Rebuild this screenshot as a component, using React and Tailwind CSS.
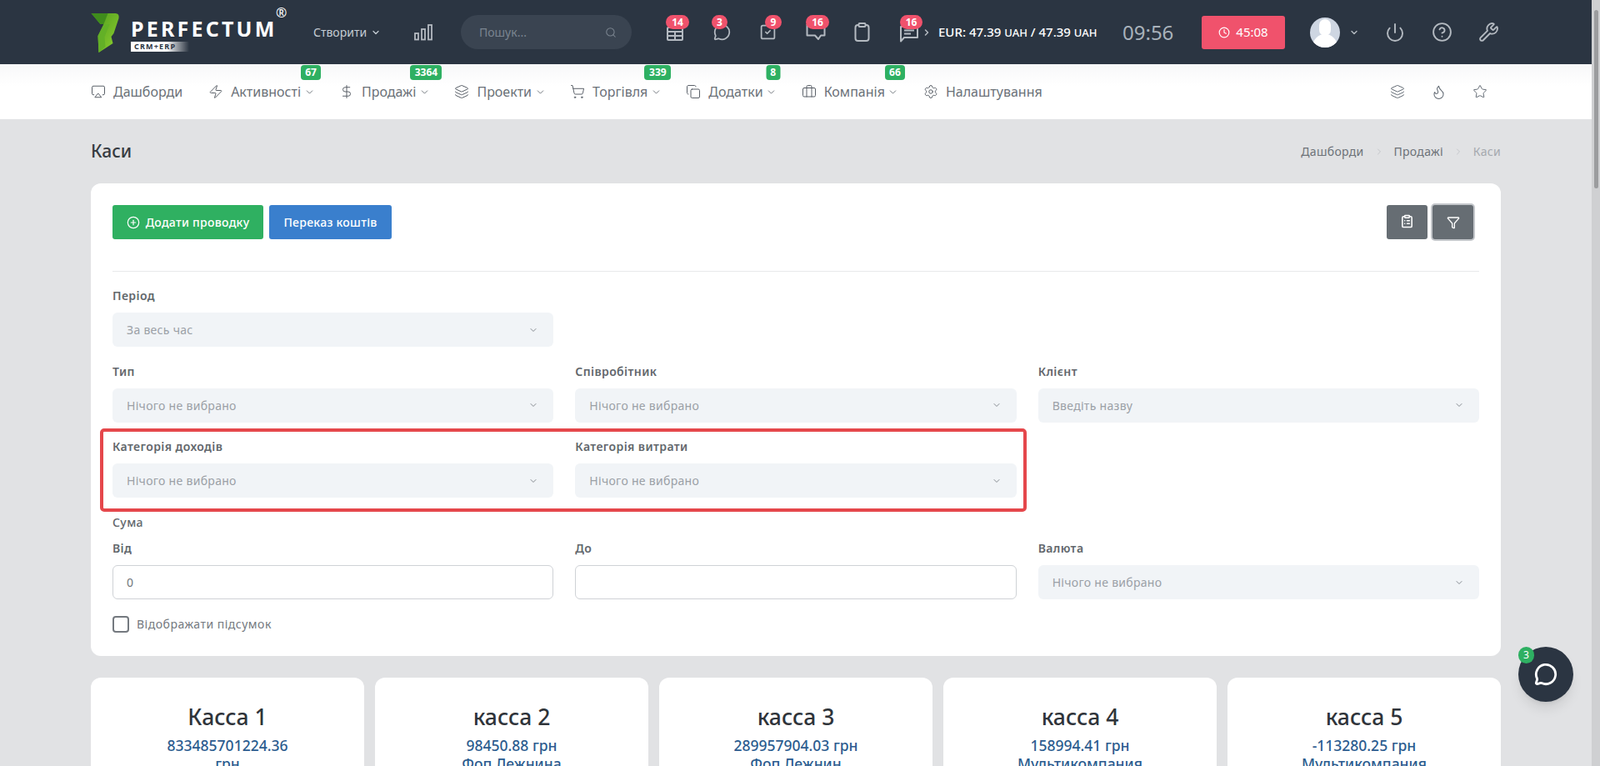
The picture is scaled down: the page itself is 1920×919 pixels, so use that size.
import React from "react";
import {
  Airplay, Zap, DollarSign, Layers, ShoppingCart, Copy, Briefcase, Settings, Flame, Star,
  ChevronDown, ChevronRight, Search, MessageCircle, SquareCheck, CircleHelp, Clock, Power, Wrench, CirclePlus, Funnel, ClipboardList,
} from "lucide-react";

function Red({ children, className }) {
  return (
    <span className={"absolute h-[17px] rounded-full bg-[#f0526c] text-white text-[12px] font-bold leading-[17px] text-center " + className}>
      {children}
    </span>
  );
}

function TopIcon({ w, children }) {
  return <div className={"relative h-[77px] flex items-center shrink-0 " + w}>{children}</div>;
}

function NavItem({ icon: Icon, label, badge, bw }) {
  return (
    <div className="flex items-center shrink-0">
      <span className="w-[27px] shrink-0">
        <Icon size={18} strokeWidth={1.3} className="text-[#555c64]" />
      </span>
      <span className="text-[16px] text-[#6b7178]">{label}</span>
      {badge !== undefined && (
        <span className="relative ml-[5px] w-[10px] flex justify-center">
          <ChevronDown size={13} strokeWidth={1.5} className="shrink-0 text-[#555c64]" />
          <span className={"absolute left-[calc(50%+2px)] -translate-x-1/2 top-[-26px] h-[18px] rounded-[4px] bg-[#2eb062] text-white text-[12px] font-bold leading-[18px] text-center " + bw}>
            {badge}
          </span>
        </span>
      )}
    </div>
  );
}

function Label({ children, className = "" }) {
  return <div className={"h-[20px] leading-[20px] text-[14px] font-semibold tracking-[0.4px] text-[#62676c] " + className}>{children}</div>;
}

function Sel({ text }) {
  return (
    <div className="h-[41px] rounded-[6px] bg-[#f1f4f7] pl-[17px] pr-[18px] flex items-center justify-between text-[14px] tracking-[0.3px] text-[#9ba0a6]">
      <span>{text}</span>
      <ChevronDown size={12} strokeWidth={2} className="text-[#868b91]" />
    </div>
  );
}

function Field({ label, text, className = "" }) {
  return (
    <div className={className}>
      <Label className="mb-[10px]">{label}</Label>
      <Sel text={text} />
    </div>
  );
}

function Cash({ title, amount, sub }) {
  return (
    <div className="bg-white rounded-[12px] h-[200px] pt-[29px] flex flex-col items-center text-center">
      <div className="text-[26.5px] font-medium leading-[36px] text-[#2f343a]">{title}</div>
      <div className="mt-[5px] max-w-[170px] text-[17.5px] font-medium leading-[22px] text-[#2c5c8f]">{amount}</div>
      <div className="text-[17.5px] font-medium leading-[22px] text-[#2c5c8f]">{sub}</div>
    </div>
  );
}

export default function App() {
  return (
    <div className="relative flex h-[919px] overflow-hidden bg-[#e1e2e4] font-['Inter',sans-serif]">
      <div className="flex-1 min-w-0">
        {/* top bar */}
        <header className="h-[77px] bg-[#2b3542] flex items-center pl-[109px]">
          <div className="w-[267px] shrink-0 flex items-start h-[48px] mt-[3px]">
            <svg width="35" height="48" viewBox="0 0 34 48" className="shrink-0">
              <defs>
                <linearGradient id="g1" x1="0" y1="0" x2="1" y2="1">
                  <stop offset="0" stopColor="#4e9a1e" />
                  <stop offset="1" stopColor="#8ed12f" />
                </linearGradient>
              </defs>
              <path d="M0 0H29Q34 0 33 6L27 24L24 28L26 36L9 47L8 27L15 13H11Z" fill="url(#g1)" />
              <path d="M0 0H20L15 13H11Z" fill="#3f8c1c" />
              <path d="M15 13L8 27L9 47L17 40L16 28L22 13Z" fill="#63b027" />
            </svg>
            <div className="relative ml-[13px] pt-[6px]">
              <div className="text-[25px] leading-[24px] font-bold text-white tracking-[3.2px]">PERFECTUM</div>
              <div className="mt-[4px] h-[12px] w-[70px] bg-linear-to-r from-white from-60% to-transparent text-[9px] leading-[12px] font-bold tracking-[1.2px] text-[#2b3542] pl-[4px]">CRM+ERP</div>
              <span className="absolute -top-[9px] -right-[12px] text-[16px] leading-[16px] text-white">®</span>
            </div>
          </div>
          <div className="w-[121px] shrink-0 flex items-center text-[14px] text-[#c5ccd3]">
            Створити
            <ChevronDown size={12} strokeWidth={2.5} className="ml-[5px]" />
          </div>
          <svg width="22" height="20" viewBox="0 0 22 20" fill="none" stroke="#b4bac1" strokeWidth="1.8" className="shrink-0">
            <rect x="1" y="11" width="4" height="7.5" />
            <rect x="9" y="6" width="4" height="12.5" />
            <rect x="17" y="1" width="4" height="17.5" />
          </svg>
          <div className="ml-[34px] w-[205px] h-[41px] shrink-0 rounded-full bg-[#3a4451] flex items-center justify-between pl-[22px] pr-[18px] text-[14px] text-[#7b8590]">
            <span>Пошук...</span>
            <Search size={14} strokeWidth={1.8} className="text-[#7b8590]" />
          </div>

          <div className="ml-[42px] flex items-center">
            <TopIcon w="w-[56px]">
              <svg width="20" height="17" viewBox="0 0 20 17" fill="none" stroke="#b4bac1" strokeWidth="2" className="mt-[4px]">
                <rect x="1" y="1" width="18" height="15" rx="1" />
                <path d="M1 6H19M1 11H19M10 6V16" />
              </svg>
              <Red className="w-[28px] left-[-1px] top-[18px]">14</Red>
            </TopIcon>
            <TopIcon w="w-[55px]">
              <MessageCircle size={21} strokeWidth={2} className="text-[#b4bac1]" />
              <Red className="w-[19px] left-[-2px] top-[18px]">3</Red>
            </TopIcon>
            <TopIcon w="w-[56px]">
              <SquareCheck size={21} strokeWidth={2} className="text-[#b4bac1]" />
              <Red className="w-[20px] left-[7px] top-[18px]">9</Red>
            </TopIcon>
            <TopIcon w="w-[58px]">
              <svg width="24" height="22" viewBox="0 0 24 22" fill="none" stroke="#b4bac1" strokeWidth="2" strokeLinejoin="round" className="-mt-[1px]">
                <path d="M1.500 2V15.500H11L15 20L18 15.500H22.500V6" />
              </svg>
              <Red className="w-[28px] left-[0px] top-[18px]">16</Red>
            </TopIcon>
            <TopIcon w="w-[55px]">
              <svg width="20" height="23" viewBox="0 0 20 23" fill="none" stroke="#b4bac1" strokeWidth="2">
                <rect x="1.500" y="3" width="16" height="19" rx="3" />
                <rect x="5.500" y="1" width="8" height="4" rx="1" fill="#2b3542" />
              </svg>
            </TopIcon>
            <TopIcon w="w-[26px]">
              <svg width="22" height="20" viewBox="0 0 22 20" fill="none" stroke="#b4bac1" strokeWidth="2" strokeLinejoin="round" className="mt-[5px]">
                <path d="M1 1H21V14H5L1 18.500Z" />
                <path d="M5 5.500H17M5 9.500H13" />
              </svg>
              <Red className="w-[27px] left-[0px] top-[18px]">16</Red>
            </TopIcon>
          </div>
          <ChevronRight size={12} strokeWidth={3} className="text-[#b4bac1] shrink-0" />
          <div className="ml-[8px] w-[221px] shrink-0 text-[15px] font-medium text-white whitespace-nowrap">
            EUR: 47.39 <span className="text-[13px]">UAH</span> / 47.39 <span className="text-[13px]">UAH</span>
          </div>
          <div className="w-[95px] shrink-0 text-[24px] text-[#a9b2bb]">09:56</div>
          <div className="w-[100px] h-[40px] shrink-0 rounded-[3px] bg-[#f0526c] flex items-center justify-center text-[15px] text-white">
            <Clock size={14} strokeWidth={2} className="mr-[7px]" />
            45:08
          </div>
          <div className="ml-[30px] w-[36px] h-[36px] shrink-0 rounded-full bg-[#ced6e2] overflow-hidden flex flex-col items-center">
            <div className="mt-[2px] w-[14px] h-[22px] rounded-full bg-white" />
            <div className="-mt-[2px] w-[30px] h-[16px] rounded-t-full bg-white" />
          </div>
          <ChevronDown size={12} strokeWidth={2.8} className="ml-[11px] text-[#b4bac1] shrink-0" />
          <Power size={24} strokeWidth={1.9} className="ml-[31px] text-[#b4bac1] shrink-0" />
          <CircleHelp size={25} strokeWidth={1.8} className="ml-[32px] text-[#b4bac1] shrink-0" />
          <Wrench size={25} strokeWidth={1.8} className="ml-[31px] text-[#b4bac1] shrink-0" />
        </header>

        {/* nav */}
        <nav className="h-[66px] bg-linear-to-b from-[#f8f8f9] to-white to-40% flex items-center pl-[109px] gap-[31px] pr-[125px]">
          <NavItem icon={Airplay} label="Дашборди" />
          <NavItem icon={Zap} label="Активності" badge="67" bw="w-[24px]" />
          <NavItem icon={DollarSign} label="Продажі" badge="3364" bw="w-[38px]" />
          <NavItem icon={Layers} label="Проекти" badge="" bw="hidden" />
          <NavItem icon={ShoppingCart} label="Торгівля" badge="339" bw="w-[32px]" />
          <NavItem icon={Copy} label="Додатки" badge="8" bw="w-[17px]" />
          <NavItem icon={Briefcase} label="Компанія" badge="66" bw="w-[24px]" />
          <NavItem icon={Settings} label="Налаштування" />
          <div className="ml-auto flex items-center gap-[31px] text-[#5f6770]">
            <Layers size={18} strokeWidth={1.3} />
            <Flame size={19} strokeWidth={1.3} />
            <Star size={18} strokeWidth={1.3} />
          </div>
        </nav>

        {/* page */}
        <main className="px-[109px]">
          <div className="h-[77px] flex items-center justify-between">
            <h1 className="text-[21px] font-medium text-[#363b41]">Каси</h1>
            <div className="flex items-center text-[14px] tracking-[0.3px] text-[#6d7278]">
              <span>Дашборди</span>
              <ChevronRight size={12} className="mx-[12px] text-[#c4c7ca]" />
              <span>Продажі</span>
              <ChevronRight size={12} className="mx-[12px] text-[#c4c7ca]" />
              <span className="text-[#a5a9ae]">Каси</span>
            </div>
          </div>

          <section className="relative bg-white rounded-[12px] h-[567px] px-[26px] pt-[26px]">
            <div className="flex items-center h-[41px]">
              <button className="w-[181px] h-[41px] rounded-[3px] bg-[#2fb061] text-white text-[14px] tracking-[0.3px] font-medium flex items-center justify-center gap-[7px]">
                <CirclePlus size={16} strokeWidth={1.8} />
                Додати проводку
              </button>
              <button className="ml-[7px] w-[147px] h-[41px] rounded-[3px] bg-[#3a7fcd] text-white text-[14px] tracking-[0.3px] font-medium">
                Переказ коштів
              </button>
              <button className="ml-auto w-[49px] h-[41px] rounded-[3px] bg-[#666d73] text-white flex items-center justify-center">
                <ClipboardList size={17} strokeWidth={2.2} className="-mt-[2px]" />
              </button>
              <button className="ml-[6px] mr-[7px] w-[49px] h-[41px] rounded-[3px] bg-[#666d73] ring-2 ring-[#c3c6ca] text-white flex items-center justify-center">
                <Funnel size={16} strokeWidth={2} />
              </button>
            </div>
            <div className="mt-[38px] mb-[19px] h-px bg-[#e8e9eb]" />

            <div className="grid grid-cols-3 gap-x-[26px] gap-y-[19.5px]">
              <Field label="Період" text="За весь час" />
              <div />
              <div />
              <Field label="Тип" text="Нічого не вибрано" />
              <Field label="Співробітник" text="Нічого не вибрано" />
              <Field label="Клієнт" text="Введіть назву" />
              <Field label="Категорія доходів" text="Нічого не вибрано" />
              <Field label="Категорія витрати" text="Нічого не вибрано" />
              <div />
            </div>

            <Label className="mt-[20px] !font-medium">Сума</Label>
            <div className="mt-[11px] grid grid-cols-3 gap-x-[26px]">
              <div>
                <Label className="mb-[10px]">Від</Label>
                <input defaultValue="0" className="w-full h-[41px] rounded-[6px] border border-[#cfd2d6] bg-white pl-[16px] text-[14px] text-[#70757a] outline-none" />
              </div>
              <div>
                <Label className="mb-[10px]">До</Label>
                <input className="w-full h-[41px] rounded-[6px] border border-[#cfd2d6] bg-white pl-[16px] text-[14px] text-[#70757a] outline-none" />
              </div>
              <Field label="Валюта" text="Нічого не вибрано" />
            </div>
            <div className="mt-[19px] flex items-center text-[14px] tracking-[0.5px] text-[#74797f]">
              <span className="w-[20px] h-[20px] rounded-[4px] border-2 border-[#74797f] mr-[9px]" />
              Відображати підсумок
            </div>

            {/* annotation */}
            <div className="absolute left-[11px] top-[294px] w-[1112px] h-[100px] rounded-[5px] border-4 border-[#e5474b]" />
          </section>

          <section className="mt-[26px] grid grid-cols-5 gap-[13px]">
            <Cash title="Касса 1" amount="833485701224.36 грн" sub="" />
            <Cash title="касса 2" amount="98450.88 грн" sub="Фоп Лежнина" />
            <Cash title="касса 3" amount="289957904.03 грн" sub="Фоп Лежнин" />
            <Cash title="касса 4" amount="158994.41 грн" sub="Мультикомпания" />
            <Cash title="касса 5" amount="-113280.25 грн" sub="Мультикомпания" />
          </section>
        </main>
      </div>

      {/* scrollbar */}
      <div className="w-[10px] shrink-0 bg-[#cfd0d2] flex flex-col items-center pt-[12px]">
        <div className="w-[5px] h-[214px] rounded-full bg-[#9b9c9e]" />
      </div>

      {/* chat */}
      <div className="absolute left-[1822px] top-[776px] w-[66px] h-[66px] rounded-full bg-[#2b3542] shadow-lg flex items-center justify-center">
        <MessageCircle size={28} strokeWidth={2.4} className="text-white" />
        <span className="absolute left-0 top-0 w-[19px] h-[20px] rounded-full bg-[#2eb062] text-white text-[12px] leading-[20px] text-center">3</span>
      </div>
    </div>
  );
}
